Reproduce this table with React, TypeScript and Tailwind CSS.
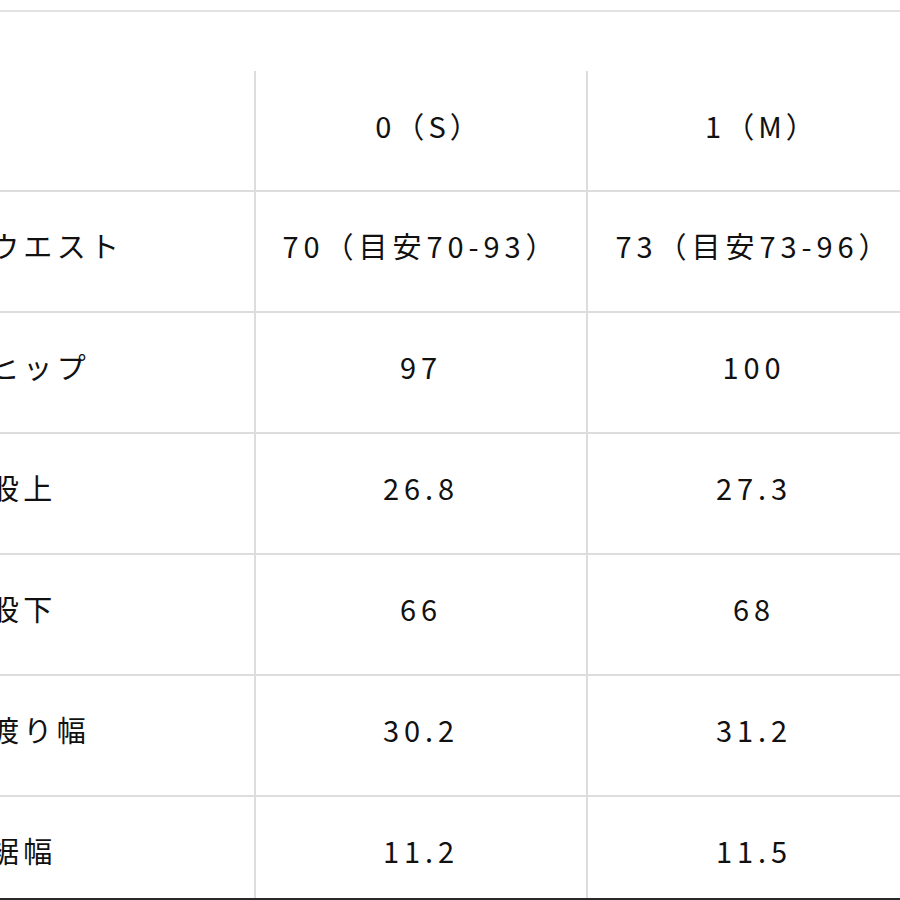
import React from 'react';

const SIZES = ['0（S）', '1（M）'];

const ROWS = [
  { label: 'ウエスト', values: ['70（目安70-93）', '73（目安73-96）'] },
  { label: 'ヒップ', values: ['97', '100'] },
  { label: '股上', values: ['26.8', '27.3'] },
  { label: '股下', values: ['66', '68'] },
  { label: '渡り幅', values: ['30.2', '31.2'] },
  { label: '裾幅', values: ['11.2', '11.5'] },
];

const font = { fontFamily: '"Noto Sans CJK JP", "Noto Sans", sans-serif' };

export default function App() {
  return (
    <div
      className="w-[900px] h-[900px] overflow-hidden bg-white text-[#111111] border-b-2 border-[#2a2a2a] antialiased"
      style={font}
    >
      {/* 上部の区切り線 */}
      <div className="pt-[10px]">
        <div className="h-[2px] w-full bg-[#e2e2e2]" />
      </div>

      {/* サイズ表 */}
      <div className="mt-[59px] grid grid-cols-[256px_332px_332px] w-[920px] text-[29px] font-normal tracking-[0.17em]">
        <div className="h-[121px] border-r-2 border-b-2 border-[#dddddd]" />
        {SIZES.map((size, i) => (
          <div
            key={size}
            className={`h-[121px] flex items-center justify-center border-b-2 border-[#dddddd] pb-[10px] pl-[16px] tracking-[0.14em] ${i === 0 ? 'border-r-2' : ''}`}
          >
            {size}
          </div>
        ))}

        {ROWS.map((row) => (
          <React.Fragment key={row.label}>
            <div className="h-[121px] flex items-center border-r-2 border-b-2 border-[#dddddd] pb-[12px]">
              <span className="-ml-[10px] tracking-[0.15em] whitespace-nowrap">{row.label}</span>
            </div>
            {row.values.map((v, i) => (
              <div
                key={i}
                className={`h-[121px] flex items-center justify-center border-b-2 border-[#dddddd] pb-[12px] whitespace-nowrap ${i === 0 ? 'border-r-2' : ''}`}
              >
                {v}
              </div>
            ))}
          </React.Fragment>
        ))}
      </div>
    </div>
  );
}
